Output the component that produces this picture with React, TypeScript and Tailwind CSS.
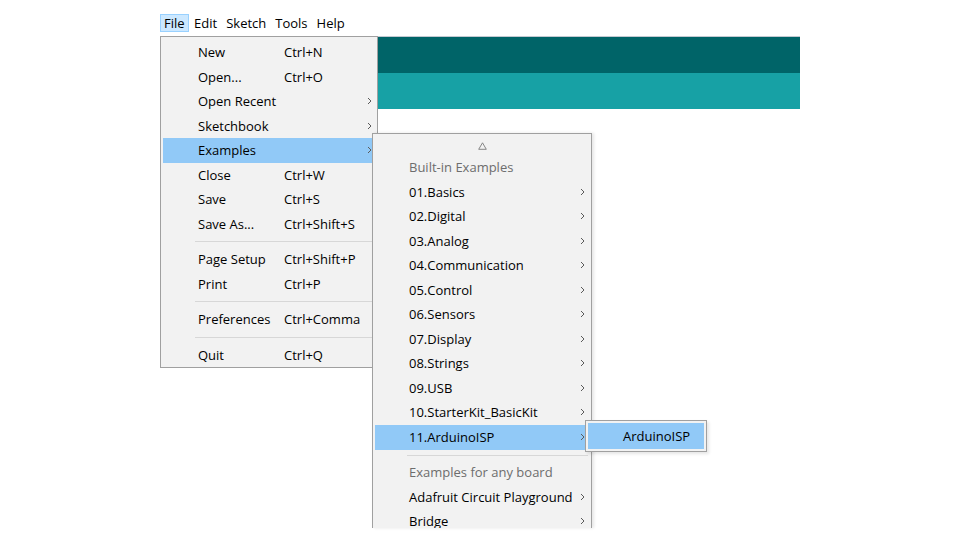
import React from 'react'

type Item =
  | { kind: 'sep' }
  | { kind: 'row'; label: string; shortcut?: string; arrow?: boolean; active?: boolean; gray?: boolean }

const fileItems: Item[] = [
  { kind: 'row', label: 'New', shortcut: 'Ctrl+N' },
  { kind: 'row', label: 'Open...', shortcut: 'Ctrl+O' },
  { kind: 'row', label: 'Open Recent', arrow: true },
  { kind: 'row', label: 'Sketchbook', arrow: true },
  { kind: 'row', label: 'Examples', arrow: true, active: true },
  { kind: 'row', label: 'Close', shortcut: 'Ctrl+W' },
  { kind: 'row', label: 'Save', shortcut: 'Ctrl+S' },
  { kind: 'row', label: 'Save As...', shortcut: 'Ctrl+Shift+S' },
  { kind: 'sep' },
  { kind: 'row', label: 'Page Setup', shortcut: 'Ctrl+Shift+P' },
  { kind: 'row', label: 'Print', shortcut: 'Ctrl+P' },
  { kind: 'sep' },
  { kind: 'row', label: 'Preferences', shortcut: 'Ctrl+Comma' },
  { kind: 'sep' },
  { kind: 'row', label: 'Quit', shortcut: 'Ctrl+Q' },
]

const exampleItems: Item[] = [
  { kind: 'row', label: 'Built-in Examples', gray: true },
  { kind: 'row', label: '01.Basics', arrow: true },
  { kind: 'row', label: '02.Digital', arrow: true },
  { kind: 'row', label: '03.Analog', arrow: true },
  { kind: 'row', label: '04.Communication', arrow: true },
  { kind: 'row', label: '05.Control', arrow: true },
  { kind: 'row', label: '06.Sensors', arrow: true },
  { kind: 'row', label: '07.Display', arrow: true },
  { kind: 'row', label: '08.Strings', arrow: true },
  { kind: 'row', label: '09.USB', arrow: true },
  { kind: 'row', label: '10.StarterKit_BasicKit', arrow: true },
  { kind: 'row', label: '11.ArduinoISP', arrow: true, active: true },
  { kind: 'sep' },
  { kind: 'row', label: 'Examples for any board', gray: true },
  { kind: 'row', label: 'Adafruit Circuit Playground', arrow: true },
  { kind: 'row', label: 'Bridge', arrow: true },
]

function Chevron() {
  return (
    <svg width="5" height="8" viewBox="0 0 5 8" className="shrink-0 -mt-[1px]">
      <path d="M1 1 L4 4 L1 7" fill="none" stroke="#5a5a5a" strokeWidth="1" />
    </svg>
  )
}

function MenuList({ items, labelWidth, indent, pr }: { items: Item[]; labelWidth: number; indent: string; pr: string }) {
  return (
    <>
      {items.map((it, i) =>
        it.kind === 'sep' ? (
          <div key={i} className="h-[11px] flex items-center pl-[32px] pr-[1px]">
            <div className="h-px w-full bg-[#d7d7d7]" />
          </div>
        ) : (
          <div
            key={i}
            className={`h-[24.5px] flex items-center ${pr} ${indent} ${it.active ? 'bg-[#91c9f7]' : ''} ${
              it.gray ? 'text-[#6d6d6d]' : 'text-black'
            }`}
          >
            <span className="shrink-0 whitespace-nowrap" style={{ width: labelWidth }}>
              {it.label}
            </span>
            <span className="flex-1 whitespace-nowrap">{it.shortcut}</span>
            {it.arrow && <Chevron />}
          </div>
        ),
      )}
    </>
  )
}

export default function App() {
  return (
    <div className="relative w-[960px] h-[540px] overflow-hidden bg-white font-['Open_Sans',sans-serif] text-[13px] leading-none">
      <div className="ml-[160px] pt-[14px] w-[640px]">
        <div className="flex h-[18px] items-center text-black">
          <span className="h-full flex items-center pt-[1px] px-[3px] mr-[1px] bg-[#cce8ff] border border-[#99d1ff]">File</span>
          <span className="px-[4.5px] pt-[1px]">Edit</span>
          <span className="px-[4.5px] pt-[1px]">Sketch</span>
          <span className="px-[4.5px] pt-[1px]">Tools</span>
          <span className="px-[4.5px] pt-[1px]">Help</span>
        </div>
        <div className="mt-[4px] border-t border-[#c3c9d1]">
          <div className="h-[36px] bg-[#006468]" />
          <div className="h-[36px] bg-[#17a1a5]" />
        </div>
      </div>

      {/* File menu */}
      <div className="absolute left-[160px] top-[36px] w-[218px] bg-[#f2f2f2] border border-[#a0a0a0] pt-[3px] px-[2px]">
        <MenuList items={fileItems} labelWidth={86} indent="pl-[35px] pt-[1px]" pr="pr-[3px]" />
      </div>

      {/* Examples submenu, cut off by the bottom of the capture */}
      <div className="absolute left-[372px] top-[133px] w-[220px] h-[395px] bg-[#f2f2f2] border border-b-0 border-[#a0a0a0] px-[2px] pt-[2px] overflow-hidden shadow-[2px_0_3px_rgba(0,0,0,0.1)]">
        <div className="h-[19.5px] flex items-center justify-center">
          <svg width="9" height="8" viewBox="0 0 9 8">
            <path d="M4.5 0.8 L8.3 7.3 L0.7 7.3 Z" fill="none" stroke="#7a7a7a" strokeWidth="0.9" />
          </svg>
        </div>
        <MenuList items={exampleItems} labelWidth={170} indent="pl-[34px]" pr="pr-[4px]" />
      </div>

      {/* ArduinoISP submenu */}
      <div className="absolute left-[585px] top-[420px] w-[122px] h-[32px] bg-[#f2f2f2] border border-[#a0a0a0] p-[2px] shadow-[2px_2px_3px_rgba(0,0,0,0.1)]">
        <div className="h-full bg-[#91c9f7] flex items-center pt-[1px] pl-[35px] text-black">ArduinoISP</div>
      </div>
    </div>
  )
}
